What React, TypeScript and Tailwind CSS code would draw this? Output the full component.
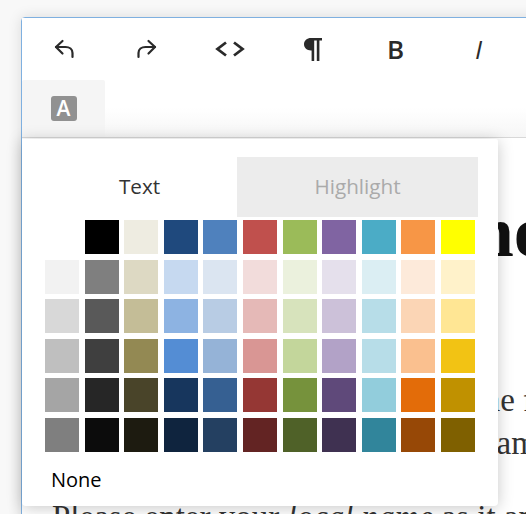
import React from "react";

const swatches = [
  ["#ffffff", "#000000", "#eeece1", "#1f497d", "#4f81bd", "#c0504d", "#9bbb59", "#8064a2", "#4bacc6", "#f79646", "#ffff00"],
  ["#f2f2f2", "#7f7f7f", "#ddd9c3", "#c6d9f0", "#dbe5f1", "#f2dcdb", "#ebf1dd", "#e5e0ec", "#dbeef3", "#fdeada", "#fff2ca"],
  ["#d8d8d8", "#595959", "#c4bd97", "#8db3e2", "#b8cce4", "#e5b9b7", "#d7e3bc", "#ccc1d9", "#b7dde8", "#fbd5b5", "#ffe694"],
  ["#bfbfbf", "#3f3f3f", "#938953", "#548dd4", "#95b3d7", "#d99694", "#c3d69b", "#b2a2c7", "#b7dde8", "#fac08f", "#f2c314"],
  ["#a5a5a5", "#262626", "#494429", "#17365d", "#366092", "#953734", "#76923c", "#5f497a", "#92cddc", "#e36c09", "#c09100"],
  ["#7f7f7f", "#0c0c0c", "#1d1b10", "#0f243e", "#244061", "#632423", "#4f6128", "#3f3151", "#31859b", "#974806", "#7f6000"],
];

const ToolButton = ({ children }: { children: React.ReactNode }) => (
  <button className="w-[83px] h-[62px] flex items-center justify-center text-[#2a2a2a]">{children}</button>
);

export default function App() {
  return (
    <div className="w-[526px] h-[514px] overflow-hidden bg-[#f8f8f8] pt-[17px] pl-[21px]">
      <div className="relative w-[600px] h-[600px] bg-white border border-[#7fb0e0] rounded-tl-[4px] shadow-[0_0_14px_rgba(0,0,0,0.12)]">
        {/* toolbar */}
        <div className="h-[120px] border-b border-[#d8d8d8] bg-gradient-to-b from-white from-75% to-[#f6f6f6]">
          <div className="flex h-[62px]">
            <ToolButton>
              <svg width="20" height="20" viewBox="0 0 20 20" fill="none" stroke="currentColor" strokeWidth="2.2" strokeLinecap="round" strokeLinejoin="round">
                <path d="M8.5 2 L2 8 L8.5 14.5" />
                <path d="M2 8 H11.5 C15.5 8 18.5 10.5 18.5 14 V18" />
              </svg>
            </ToolButton>
            <ToolButton>
              <svg width="20" height="20" viewBox="0 0 20 20" fill="none" stroke="currentColor" strokeWidth="2.2" strokeLinecap="round" strokeLinejoin="round">
                <path d="M11.5 2 L18 8 L11.5 14.5" />
                <path d="M18 8 H8.5 C4.5 8 1.5 10.5 1.5 14 V18" />
              </svg>
            </ToolButton>
            <ToolButton>
              <svg width="30" height="16" viewBox="0 0 30 16" fill="none" stroke="currentColor" strokeWidth="2.8">
                <path d="M11 1.5 L2.5 8 L11 14.5" />
                <path d="M19 1.5 L27.5 8 L19 14.5" />
              </svg>
            </ToolButton>
            <ToolButton>
              <svg width="18" height="23" viewBox="0 0 18 23" fill="currentColor">
                <path d="M18 0H7C3 0 0 2.6 0 6.2s3 6.2 7 6.2h.6V23h2.6V2.4h2.6V23h2.6V2.4H18z" />
              </svg>
            </ToolButton>
            <ToolButton>
              <span className="font-['Open_Sans',sans-serif] font-semibold text-[26px] leading-none">B</span>
            </ToolButton>
            <ToolButton>
              <span className="font-['Open_Sans',sans-serif] italic font-medium text-[26px] leading-none">I</span>
            </ToolButton>
          </div>
          <div className="w-[83px] h-[57px] bg-[#f5f5f5] rounded-t-[2px] flex items-center justify-center">
            <span className="w-[26px] h-[25px] rounded-[3px] bg-[#919191] text-white font-['Open_Sans',sans-serif] font-semibold text-[21px] leading-none flex items-center justify-center">
              A
            </span>
          </div>
        </div>

        {/* editor text behind the popup */}
        <div className="pl-[30px] font-['Liberation_Serif',serif] text-[#333333] whitespace-nowrap">
          <h1 className="mt-[54px] ml-[13px] text-[72px] leading-[80px] font-bold text-[#111111]">Your Telephone</h1>
          <p className="mt-[107px] text-[33px] leading-[43px]">
            Please enter your name as is on the front
            <span className="block -ml-[10px]">your card, including your family name</span>
          </p>
          <p className="mt-[31px] text-[33px] leading-[43px]">
            Please enter your <em>local name</em> as it appears
          </p>
        </div>

        {/* colour popup */}
        <div className="absolute left-0 top-[121px] w-[476px] h-[367px] bg-white rounded-b-[4px] rounded-tr-[2px] shadow-[0_2px_16px_rgba(0,0,0,0.22)] px-[20px] pt-[18px] font-['Open_Sans',sans-serif]">
          <div className="flex h-[60px] w-[436px] text-[20.7px]">
            <div className="w-[195px] flex items-center justify-center text-[#333333]">Text</div>
            <div className="w-[241px] flex items-center justify-center bg-[#ececec] text-[#aaaaaa]">Highlight</div>
          </div>
          <div className="grid grid-cols-[repeat(11,34px)] auto-rows-[34px] gap-[5.6px] ml-[3px] mt-[3px]">
            {swatches.flat().map((color, i) => (
              <div key={i} style={{ backgroundColor: color }} />
            ))}
          </div>
          <div className="mt-[13px] ml-[9px] text-[20px] leading-[30px] text-black">None</div>
        </div>
      </div>
    </div>
  );
}
